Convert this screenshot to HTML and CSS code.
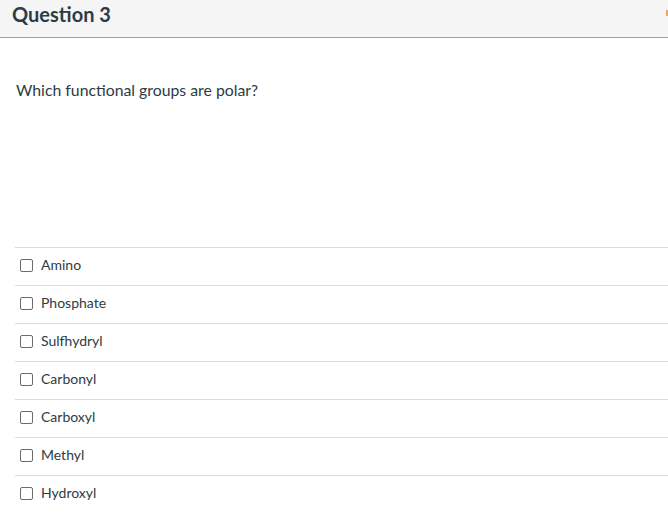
FILE: index.html
```html
<!DOCTYPE html>
<html>
<head>
<meta charset="utf-8">
<link rel="stylesheet" href="styles.css">
</head>
<body>
<div class="quiz">
  <div class="header">
    <h2 class="title">Question 3</h2>
    <span class="pts"></span>
  </div>
  <div class="content">
    <p class="prompt">Which functional groups are polar?</p>
    <div class="answers">
      <label class="answer"><span class="box"></span><span class="text">Amino</span></label>
      <label class="answer"><span class="box"></span><span class="text">Phosphate</span></label>
      <label class="answer"><span class="box"></span><span class="text">Sulfhydryl</span></label>
      <label class="answer"><span class="box"></span><span class="text">Carbonyl</span></label>
      <label class="answer"><span class="box"></span><span class="text">Carboxyl</span></label>
      <label class="answer"><span class="box"></span><span class="text">Methyl</span></label>
      <label class="answer"><span class="box"></span><span class="text">Hydroxyl</span></label>
    </div>
  </div>
</div>
</body>
</html>
```
FILE: styles.css
```css
html, body {
  margin: 0;
  padding: 0;
  background: #fff;
  font-family: Lato, "Noto Sans", sans-serif;
  color: #2d3b45;
}
.quiz {
  width: 668px;
}
.header {
  height: 37px;
  background: #f5f5f5;
  border-bottom: 1px solid #a0a0a0;
  display: flex;
  align-items: center;
  justify-content: space-between;
  padding-left: 12px;
  box-sizing: content-box;
}
.title {
  margin: 0;
  font-size: 20px;
  font-weight: 700;
  color: #2d3b45;
  line-height: 1;
  margin-top: -9px;
}
.pts {
  width: 2px;
  height: 6px;
  background: #f0a850;
  margin-top: -12px;
}
.content {
  padding: 0 0 0 15px;
}
.prompt {
  margin: 0;
  padding-top: 42px;
  padding-left: 1px;
  font-size: 15.8px;
  line-height: 20px;
  color: #2d3b45;
  height: 167px;
  box-sizing: content-box;
}
.answers {
  display: flex;
  flex-direction: column;
}
.answer {
  display: flex;
  align-items: center;
  height: 34px;
  padding-bottom: 3px;
  border-top: 1px solid #dcdcdc;
  padding-left: 5px;
  font-size: 14px;
  color: #2d3b45;
}
.box {
  width: 11px;
  height: 11px;
  border: 1px solid #6b6b6b;
  border-radius: 2px;
  background: #fff;
  margin-right: 8px;
}
.text {
  line-height: 1;
}
```
